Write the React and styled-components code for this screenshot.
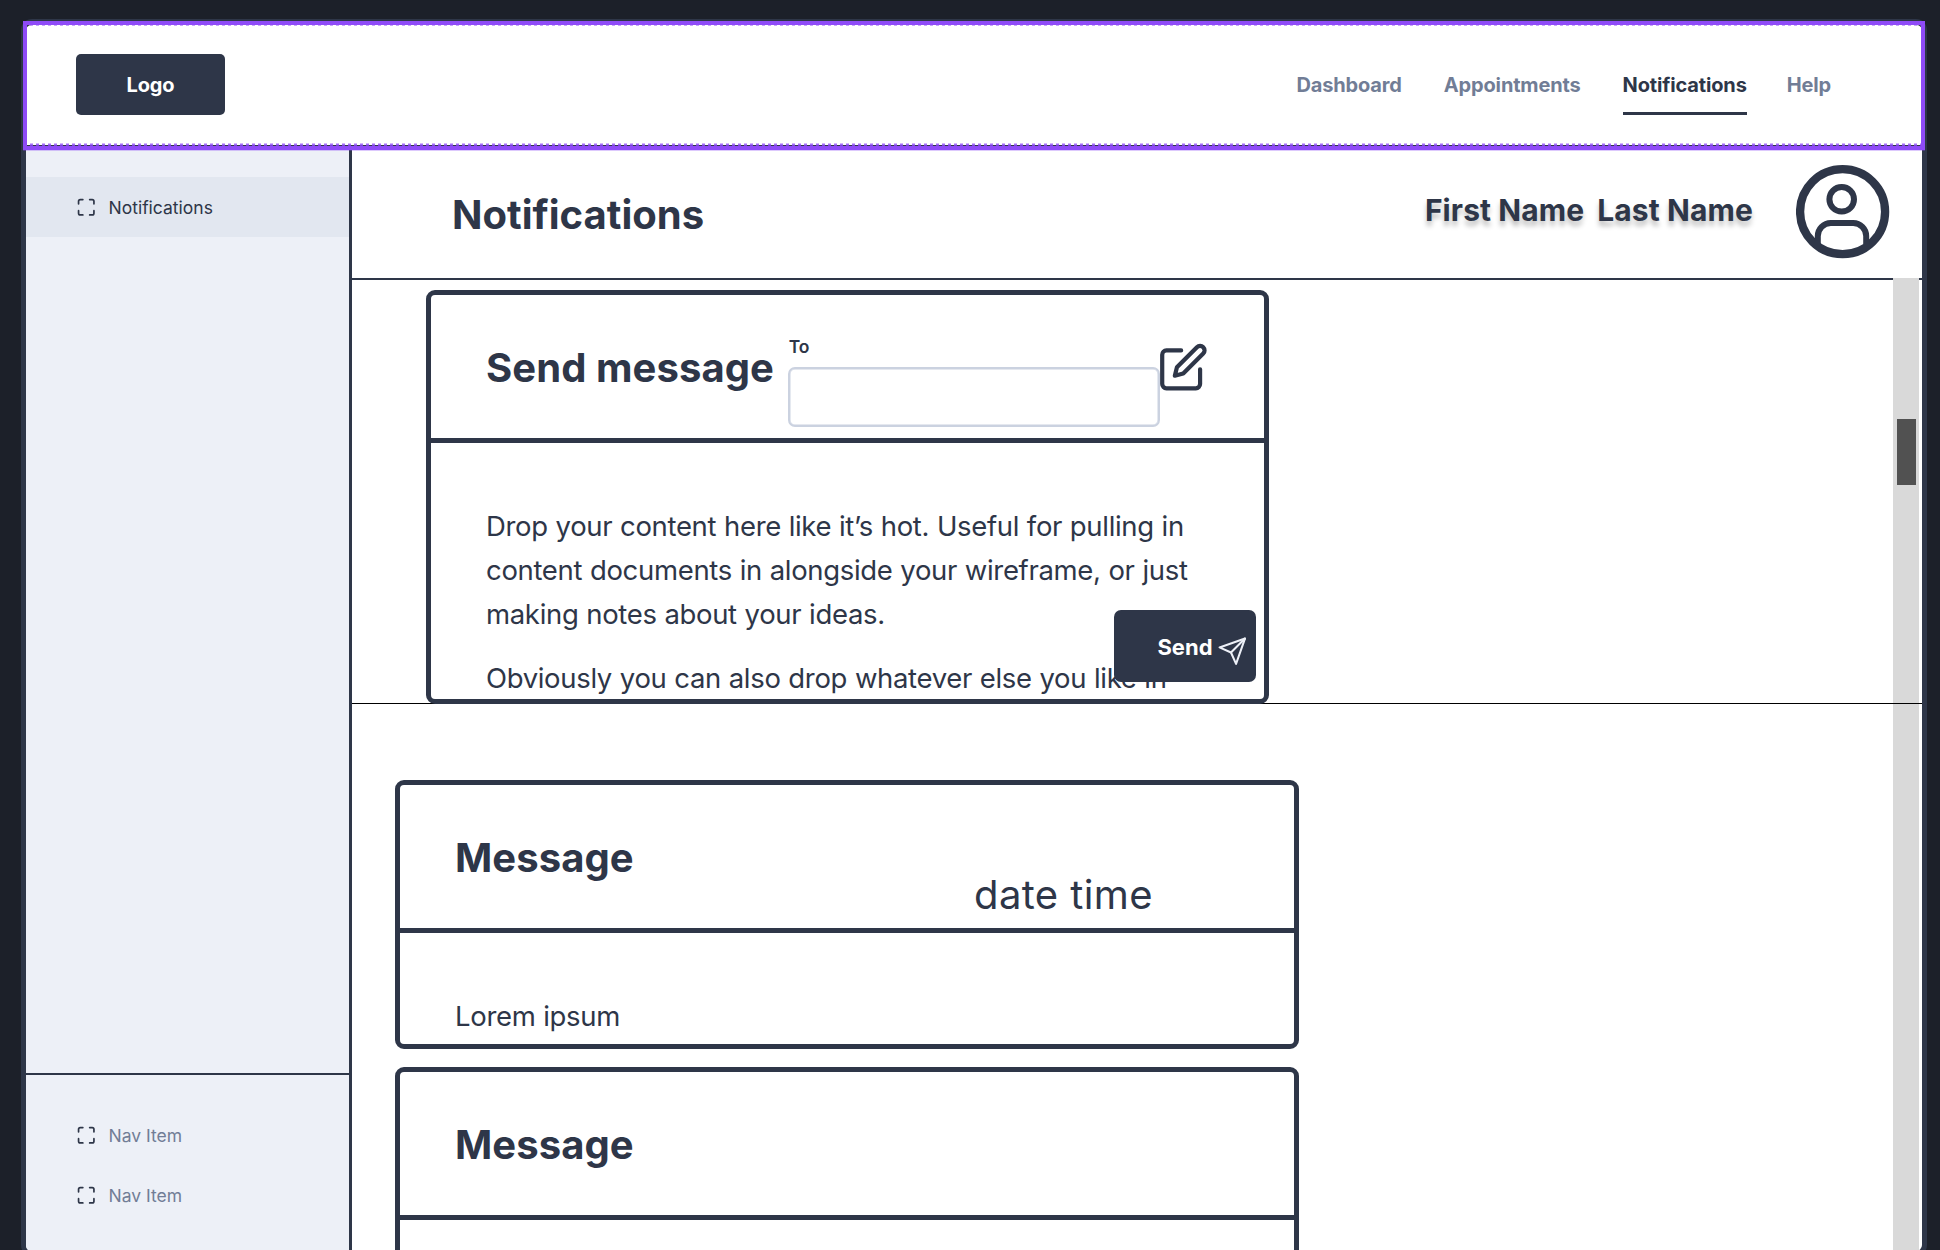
import React from 'react';
import styled, { createGlobalStyle } from 'styled-components';

const ink = '#2e3648';
const muted = '#717d96';
const line = '#cbd2e0';
const purple = '#8f4bf7';

const GlobalStyle = createGlobalStyle`
  *, *::before, *::after { box-sizing: border-box; }
  body {
    margin: 0;
    background: #1c2029;
    color: ${ink};
    font-family: Inter, "Liberation Sans", sans-serif;
    -webkit-font-smoothing: antialiased;
  }
  h1, h2, p { margin: 0; }
`;

const Page = styled.div`
  height: 1250px;
  padding: 19px 13px 0 21px;
  overflow: hidden;
`;

const Frame = styled.div`
  display: flex;
  flex-direction: column;
  width: 1906px;
  height: 1237px;
  border: 5px solid ${ink};
  border-top-width: 6px;
  border-radius: 11px;
  background: #fff;
`;

const Navbar = styled.header`
  position: relative;
  display: flex;
  justify-content: space-between;
  height: 122px;
  padding: 29px 91px 0 50px;
  border-bottom: 2px solid ${ink};
  flex: none;
`;

const Selection = styled.div`
  position: absolute;
  inset: -4px -3px -5px -3px;
  border: 4px solid ${purple};
  box-shadow: 0 1px 0 rgba(143, 75, 247, 0.3);
  pointer-events: none;

  &::before,
  &::after {
    content: '';
    position: absolute;
    left: 0;
    right: 0;
    height: 1px;
    background: repeating-linear-gradient(90deg, transparent 0 3px, ${purple} 3px 6px);
  }
  &::before { top: 0; opacity: 0.5; }
  &::after {
    bottom: 0;
    height: 3px;
    mask-image: linear-gradient(rgba(0, 0, 0, 0.4) 1px, rgba(0, 0, 0, 0.8) 1px);
  }
`;

const Logo = styled.div`
  display: flex;
  align-items: center;
  justify-content: center;
  width: 149px;
  height: 61px;
  border-radius: 5px;
  background: ${ink};
  color: #fff;
  font-size: 20px;
  font-weight: 700;
  letter-spacing: -0.15px;
`;

const Menu = styled.nav`
  display: flex;
  gap: 42px;
  height: 61px;
`;

const MenuLink = styled.a`
  display: flex;
  align-items: center;
  padding-top: 3px;
  border-bottom: 3px solid ${(p) => (p.$active ? ink : 'transparent')};
  color: ${(p) => (p.$active ? ink : muted)};
  font-size: 20px;
  font-weight: 700;
  letter-spacing: -0.15px;

  &:last-child { margin-left: -2px; }
`;

const Workspace = styled.div`
  display: grid;
  grid-template-columns: 326px 1fr;
  flex: 1;
  min-height: 0;
`;

const Sidebar = styled.aside`
  display: flex;
  flex-direction: column;
  justify-content: space-between;
  border-right: 3px solid ${ink};
  border-bottom-left-radius: 5px;
  background: #edf0f7;
  padding-top: 30px;
`;

const SidebarFooter = styled.div`
  height: 178px;
  padding-top: 30px;
  border-top: 2px solid ${ink};
`;

const SideLink = styled.a`
  display: flex;
  align-items: center;
  gap: 12px;
  height: 60px;
  padding-left: 50px;
  background: ${(p) => (p.$active ? '#e2e7f0' : 'transparent')};
  color: ${(p) => (p.$active ? ink : muted)};
  font-size: 17.5px;

  svg { color: ${ink}; }
`;

const Main = styled.main`
  display: flex;
  flex-direction: column;
  min-width: 0;
`;

const PageHeader = styled.div`
  display: flex;
  align-items: center;
  height: 133px;
  padding: 0 32px 2px 100px;
  border-bottom: 2px solid ${ink};
  flex: none;
`;

const Title = styled.h1`
  padding-top: 6px;
  font-size: 40px;
  line-height: 50px;
  font-weight: 700;
`;

const UserName = styled.div`
  display: flex;
  gap: 13px;
  margin: 0 43px 0 auto;
  padding-bottom: 3px;
  font-size: 30px;
  line-height: 36px;
  font-weight: 700;
  letter-spacing: 0.1px;
  text-shadow: 0 5px 5px rgba(0, 0, 0, 0.25);
`;

const Content = styled.div`
  position: relative;
  flex: 1;
  min-height: 0;
  overflow: visible;
`;

const Track = styled.div`
  position: absolute;
  top: -2px;
  right: 3px;
  bottom: 0;
  width: 26px;
  padding: 141px 3px 0 4px;
  background: #d9d9d9;
`;

const Thumb = styled.div`
  height: 66px;
  background: #515151;
`;

const Composer = styled.section`
  position: relative;
  height: 424px;
  padding: 10px 0 0 74px;
  border-bottom: 1px solid #000;
`;

const Card = styled.article`
  position: relative;
  width: ${(p) => p.$width}px;
  height: ${(p) => p.$height}px;
  border: 5px solid ${ink};
  border-radius: 9px;
  background: #fff;
  overflow: hidden;
`;

const CardHeader = styled.div`
  display: flex;
  align-items: center;
  height: 148px;
  padding-left: 55px;
  border-bottom: 5px solid ${ink};
`;

const CardTitle = styled.h2`
  width: ${(p) => p.$width}px;
  flex: none;
  padding-top: 2px;
  font-size: 40px;
  line-height: 50px;
  font-weight: 700;
  letter-spacing: 0.08px;
  white-space: nowrap;
`;

const CardBody = styled.div`
  display: flex;
  flex-direction: column;
  gap: 20px;
  padding: 61px 55px 0;
  font-size: 27.5px;
  line-height: 44px;
  letter-spacing: -0.33px;
  word-spacing: 0.4px;
`;

const Field = styled.label`
  display: flex;
  flex-direction: column;
  gap: 8px;
  width: 372px;
  padding-top: 28px;
  font-size: 17.5px;
  line-height: 24px;
  font-weight: 600;
  text-indent: 0.7px;
`;

const Input = styled.input`
  height: 60px;
  border: 2px solid ${line};
  border-radius: 7px;
  background: #fff;
  box-shadow: inset 0 0 0 0.5px ${line};
`;

const EditWrap = styled.span`
  display: flex;
  margin: 1px 0 0 -2px;
`;

const SendButton = styled.button`
  position: absolute;
  right: 8px;
  bottom: 17px;
  display: flex;
  align-items: center;
  justify-content: flex-end;
  gap: 4px;
  width: 142px;
  height: 72px;
  padding: 2px 9px 0 0;
  border: 0;
  border-radius: 7px;
  background: ${ink};
  color: #fff;
  font: 700 22px Inter, sans-serif;

  svg { margin-top: 8px; color: #edf0f7; }
`;

const Messages = styled.section`
  display: flex;
  flex-direction: column;
  gap: 18px;
  height: 546px;
  padding: 76px 0 0 43px;
  overflow: hidden;

  & > * { flex: none; }
`;

const DateTime = styled.time`
  align-self: flex-end;
  padding-bottom: 9px;
  font-size: 40px;
  line-height: 48px;
  letter-spacing: 0.4px;
`;

const Stroke = ({ size, width = 2, children }) => (
  <svg width={size} height={size} viewBox="0 0 24 24" fill="none" stroke="currentColor"
    strokeWidth={width} strokeLinecap="round" strokeLinejoin="round">
    {children}
  </svg>
);

const CornersIcon = () => (
  <Stroke size={20.5}>
    <path d="M8 3H5a2 2 0 0 0-2 2v3m18 0V5a2 2 0 0 0-2-2h-3m0 18h3a2 2 0 0 0 2-2v-3M3 16v3a2 2 0 0 0 2 2h3" />
  </Stroke>
);

const EditIcon = () => (
  <Stroke size={50.5}>
    <path d="M11 4H4a2 2 0 0 0-2 2v14a2 2 0 0 0 2 2h14a2 2 0 0 0 2-2v-7" />
    <path d="M18.5 2.5a2.121 2.121 0 0 1 3 3L12 15l-4 1 1-4 9.5-9.5z" />
  </Stroke>
);

const SendIcon = () => (
  <Stroke size={30.5} width={1.6}>
    <path d="M22 2 11 13" />
    <path d="m22 2-7 20-4-9-9-4 20-7z" />
  </Stroke>
);

const Avatar = () => (
  <svg width="94" height="94" viewBox="0 0 94 94" fill="none" stroke={ink}>
    <circle cx="46.6" cy="46.7" r="42.5" strokeWidth="8.3" />
    <circle cx="45.7" cy="34.3" r="12.3" strokeWidth="6" />
    <path d="M21.8 79V71a13 13 0 0 1 13-13h22.4a13 13 0 0 1 13 13v8" strokeWidth="6" />
  </svg>
);

const menu = ['Dashboard', 'Appointments', 'Notifications', 'Help'];

export default function App() {
  return (
    <Page>
      <GlobalStyle />
      <Frame>
        <Navbar>
          <Logo>Logo</Logo>
          <Menu>
            {menu.map((m) => <MenuLink key={m} $active={m === 'Notifications'}>{m}</MenuLink>)}
          </Menu>
          <Selection />
        </Navbar>
        <Workspace>
          <Sidebar>
            <SideLink $active><CornersIcon />Notifications</SideLink>
            <SidebarFooter>
              <SideLink><CornersIcon />Nav Item</SideLink>
              <SideLink><CornersIcon />Nav Item</SideLink>
            </SidebarFooter>
          </Sidebar>
          <Main>
            <PageHeader>
              <Title>Notifications</Title>
              <UserName><span>First Name</span><span>Last Name</span></UserName>
              <Avatar />
            </PageHeader>
            <Content>
              <Track><Thumb /></Track>
              <Composer>
                <Card $width={843} $height={414}>
                  <CardHeader>
                    <CardTitle $width={302}>Send message</CardTitle>
                    <Field>To<Input readOnly /></Field>
                    <EditWrap><EditIcon /></EditWrap>
                  </CardHeader>
                  <CardBody>
                    <p>Drop your content here like it’s hot. Useful for pulling in content documents in alongside your wireframe, or just making notes about your ideas.</p>
                    <p>Obviously you can also drop whatever else you like in</p>
                  </CardBody>
                  <SendButton>Send<SendIcon /></SendButton>
                </Card>
              </Composer>
              <Messages>
                <Card $width={904} $height={269}>
                  <CardHeader>
                    <CardTitle $width={519}>Message</CardTitle>
                    <DateTime>date time</DateTime>
                  </CardHeader>
                  <CardBody><p>Lorem ipsum</p></CardBody>
                </Card>
                <Card $width={904} $height={269}>
                  <CardHeader><CardTitle>Message</CardTitle></CardHeader>
                </Card>
              </Messages>
            </Content>
          </Main>
        </Workspace>
      </Frame>
    </Page>
  );
}
